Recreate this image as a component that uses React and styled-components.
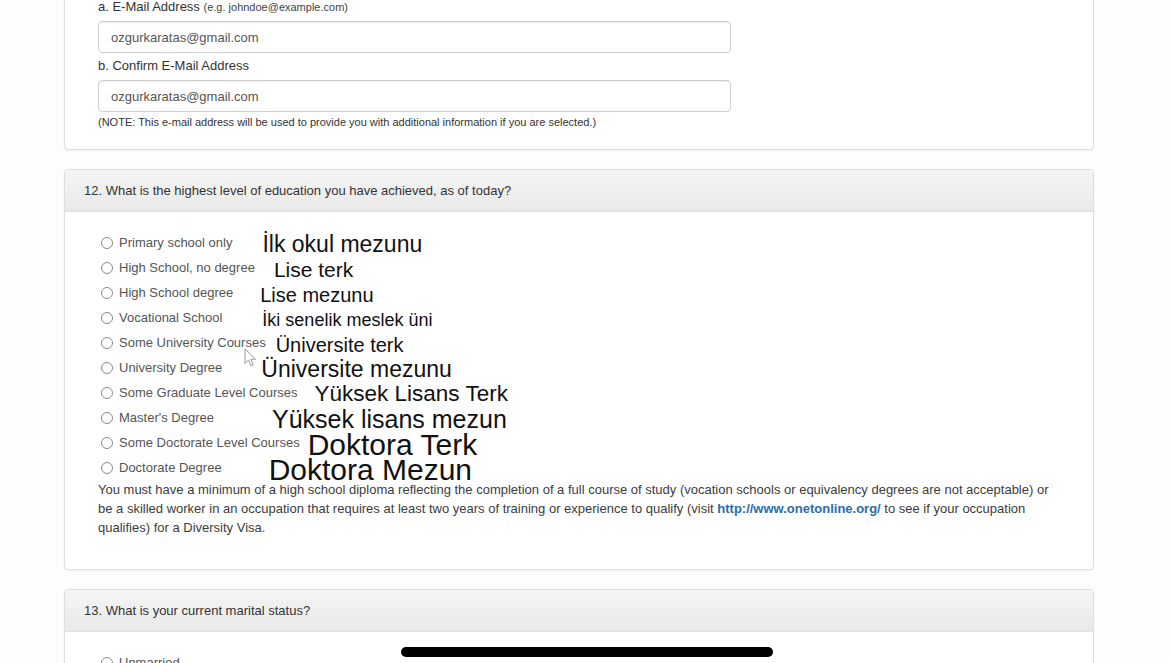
import React from "react";
import styled, { createGlobalStyle } from "styled-components";

const educationOptions = [
  { label: "Primary school only", note: "İlk okul mezunu", size: 23, gap: 30 },
  { label: "High School, no degree", note: "Lise terk", size: 21, gap: 19 },
  { label: "High School degree", note: "Lise mezunu", size: 20, gap: 27 },
  { label: "Vocational School", note: "İki senelik meslek üni", size: 18, gap: 40 },
  { label: "Some University Courses", note: "Üniversite terk", size: 20, gap: 10 },
  { label: "University Degree", note: "Üniversite mezunu", size: 23, gap: 39 },
  { label: "Some Graduate Level Courses", note: "Yüksek Lisans Terk", size: 22.5, gap: 17 },
  { label: "Master's Degree", note: "Yüksek lisans mezun", size: 25, gap: 58 },
  { label: "Some Doctorate Level Courses", note: "Doktora Terk", size: 30, gap: 8 },
  { label: "Doctorate Degree", note: "Doktora Mezun", size: 30, gap: 47 },
];

const GlobalStyle = createGlobalStyle`
  html, body {
    margin: 0;
    background: #fdfdfd;
    font-family: "Liberation Sans", Arial, sans-serif;
    overflow: hidden;
  }
`;

const Page = styled.div`
  width: 1030px;
  margin: -17px 0 0 64px;
`;

const Panel = styled.section`
  background: #fff;
  border: 1px solid #dedede;
  border-radius: 4px;
  box-shadow: 0 1px 2px rgba(0, 0, 0, 0.05);
  margin-bottom: 19px;
`;

const PanelHeading = styled.div`
  height: 41px;
  display: flex;
  align-items: center;
  padding: 0 19px;
  background: linear-gradient(to bottom, #f5f5f5, #e9e9e9);
  border-bottom: 1px solid #e0e0e0;
  border-radius: 3px 3px 0 0;
  font-size: 13px;
  color: #333;
`;

const PanelBody = styled.div`
  padding: ${(p) => p.$pad || "18px 33px 32px"};
`;

const FieldLabel = styled.div`
  font-size: 13px;
  line-height: 14px;
  color: #333;
  margin-bottom: 7px;
`;

const Hint = styled.span`
  font-size: 11px;
  color: #444;
`;

const TextInput = styled.div`
  box-sizing: border-box;
  width: 633px;
  height: 32px;
  display: flex;
  align-items: center;
  padding: 0 12px;
  border: 1px solid #cfcfcf;
  border-radius: 4px;
  box-shadow: inset 0 1px 1px rgba(0, 0, 0, 0.075);
  font-size: 13px;
  color: #555;
  margin-bottom: ${(p) => p.$mb || 6}px;
`;

const Note = styled.div`
  font-size: 11px;
  line-height: 12px;
  color: #333;
`;

const OptionList = styled.div`
  display: flex;
  flex-direction: column;
  padding-left: 3px;
`;

const OptionRow = styled.div`
  height: 25px;
  display: flex;
  align-items: center;
  white-space: nowrap;
`;

const Radio = styled.span`
  box-sizing: border-box;
  width: 12px;
  height: 12px;
  border: 1px solid #8a8a8a;
  border-radius: 50%;
  background: #fff;
  flex: none;
`;

const OptionLabel = styled.span`
  margin-left: 6px;
  font-size: 13px;
  color: #555;
`;

const Annotation = styled.span`
  margin-left: ${(p) => p.$gap}px;
  font-size: ${(p) => p.$size}px;
  line-height: 1;
  color: #111;
  transform: translateY(2px);
`;

const Paragraph = styled.p`
  margin: 0;
  font-size: 13px;
  line-height: 19px;
  color: #3c3c3c;

  a {
    color: #2b6cab;
    font-weight: bold;
    text-decoration: none;
  }
`;

const HomeIndicator = styled.div`
  position: fixed;
  left: 401px;
  top: 647px;
  width: 372px;
  height: 10px;
  border-radius: 5px;
  background: #000;
`;

const Cursor = styled.svg`
  position: fixed;
  left: 244px;
  top: 348px;
`;

export default function App() {
  return (
    <>
      <GlobalStyle />
      <Page>
        <Panel>
          <PanelBody $pad="16px 33px 21px">
            <FieldLabel>
              a. E-Mail Address <Hint>(e.g. johndoe@example.com)</Hint>
            </FieldLabel>
            <TextInput>ozgurkaratas@gmail.com</TextInput>
            <FieldLabel>b. Confirm E-Mail Address</FieldLabel>
            <TextInput $mb={4}>ozgurkaratas@gmail.com</TextInput>
            <Note>
              (NOTE: This e-mail address will be used to provide you with additional
              information if you are selected.)
            </Note>
          </PanelBody>
        </Panel>

        <Panel>
          <PanelHeading>
            12. What is the highest level of education you have achieved, as of today?
          </PanelHeading>
          <PanelBody>
            <OptionList>
              {educationOptions.map((o) => (
                <OptionRow key={o.label}>
                  <Radio />
                  <OptionLabel>{o.label}</OptionLabel>
                  <Annotation $gap={o.gap} $size={o.size}>
                    {o.note}
                  </Annotation>
                </OptionRow>
              ))}
            </OptionList>
            <Paragraph>
              You must have a minimum of a high school diploma reflecting the completion of a
              full course of study (vocation schools or equivalency degrees are not acceptable)
              or be a skilled worker in an occupation that requires at least two years of
              training or experience to qualify (visit{" "}
              <a href="#">http://www.onetonline.org/</a> to see if your occupation qualifies)
              for a Diversity Visa.
            </Paragraph>
          </PanelBody>
        </Panel>

        <Panel>
          <PanelHeading>13. What is your current marital status?</PanelHeading>
          <PanelBody>
            <OptionList>
              <OptionRow>
                <Radio />
                <OptionLabel>Unmarried</OptionLabel>
              </OptionRow>
            </OptionList>
          </PanelBody>
        </Panel>
      </Page>

      <Cursor width="13" height="20" viewBox="0 0 13 20">
        <path
          d="M1 1 L1 15.5 L4.6 12 L7 17.8 L9.2 16.9 L6.8 11.2 L11.6 11.2 Z"
          fill="#fff"
          stroke="#9a9a9a"
          strokeWidth="1"
          strokeLinejoin="round"
        />
      </Cursor>
      <HomeIndicator />
    </>
  );
}
